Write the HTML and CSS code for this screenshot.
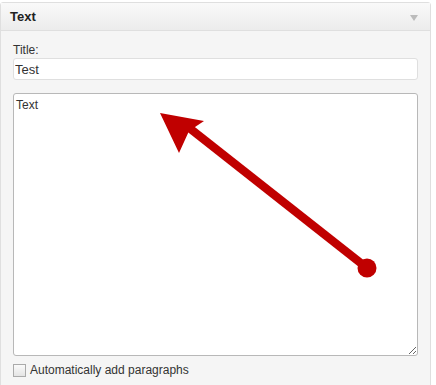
FILE: index.html
```html
<!DOCTYPE html>
<html lang="en">
<head>
  <meta charset="UTF-8" />
  <title>Text Widget</title>
  <link rel="stylesheet" href="styles.css">
</head>
<body>
  <div class="widget">
    <div class="widget-top">
      <h4>Text</h4>
      <span class="toggle"></span>
    </div>
    <div class="widget-inside">
      <label class="field-label" for="title">Title:</label>
      <input id="title" class="title-input" type="text" value="Test">

      <div class="text-wrap">
        <textarea class="text-area">Text</textarea>
        <svg class="arrow" width="405" height="263" viewBox="0 0 405 263">
          <line x1="354" y1="175" x2="170" y2="30" stroke="#c00000" stroke-width="8.5" />
          <polygon points="147,20 191,28 176,38 166,60" fill="#c00000" />
          <circle cx="354" cy="175" r="9.5" fill="#c00000" />
        </svg>
      </div>

      <label class="auto-p">
        <span class="check"></span>
        Automatically add paragraphs
      </label>
    </div>
  </div>
</body>
</html>
```

FILE: styles.css
```css
body {
  margin: 0;
  background-color: #fff;
  font-family: "Liberation Sans", Arial, sans-serif;
  font-size: 12px;
  color: #333;
}

.widget {
  margin-top: 2px;
  width: 429px;
  height: 400px;
  border: 1px solid #dfdfdf;
  border-radius: 3px 3px 0 0;
  background-color: #f5f5f5;
}

.widget-top {
  display: flex;
  justify-content: space-between;
  align-items: center;
  height: 27px;
  padding: 0 12px 0 9px;
  border-bottom: 1px solid #dfdfdf;
  background: linear-gradient(to bottom, #f9f9f9, #ececec);
}

.widget-top h4 {
  margin: 0;
  font-size: 13px;
  font-weight: bold;
  color: #222;
}

.toggle {
  width: 0;
  height: 0;
  margin-top: 2px;
  border-left: 4px solid transparent;
  border-right: 4px solid transparent;
  border-top: 6px solid #bbb;
}

.widget-inside {
  display: flex;
  flex-direction: column;
  padding: 11px 12px 0 12px;
}

.field-label {
  line-height: 16px;
}

.title-input {
  box-sizing: border-box;
  width: 405px;
  height: 22px;
  margin: 0;
  padding: 0 1px;
  border: 1px solid #dfdfdf;
  border-radius: 3px;
  background-color: #fff;
  font-family: inherit;
  font-size: 13px;
  color: #333;
}

.text-wrap {
  position: relative;
  margin-top: 13px;
  width: 405px;
  height: 263px;
}

.text-area {
  box-sizing: border-box;
  display: block;
  width: 405px;
  height: 263px;
  margin: 0;
  padding: 4px 2px;
  border: 1px solid #b8b8b8;
  border-radius: 3px;
  background-color: #fff;
  font-family: inherit;
  font-size: 12px;
  color: #333;
  resize: vertical;
}

.arrow {
  position: absolute;
  left: 0;
  top: 0;
  pointer-events: none;
}

.auto-p {
  display: flex;
  align-items: center;
  gap: 4px;
  margin-top: 6px;
  line-height: 16px;
}

.check {
  width: 11px;
  height: 11px;
  border: 1px solid #aaa;
  background: linear-gradient(to bottom, #fafafa, #e4e4e4);
}
```
